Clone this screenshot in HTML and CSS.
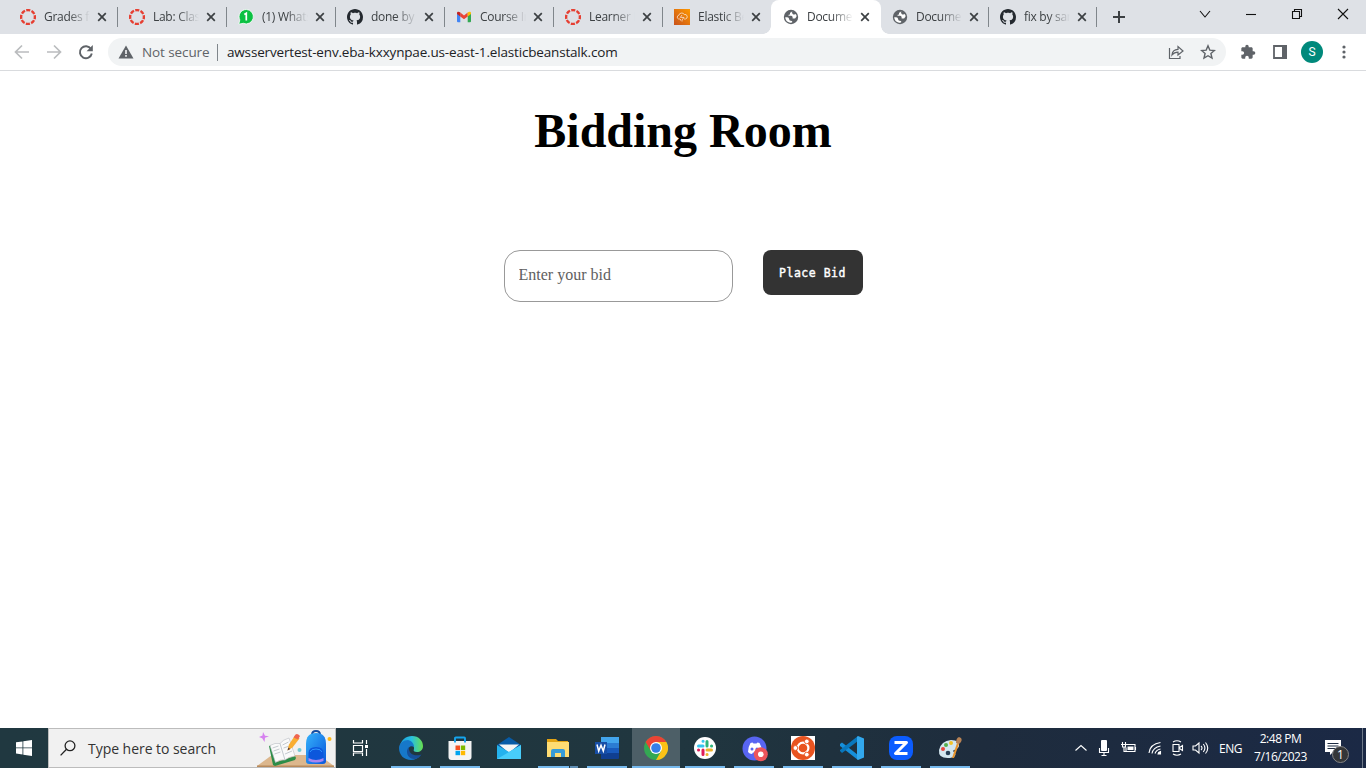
FILE: index.html
```html
<!DOCTYPE html>
<html lang="en">
<head>
<meta charset="utf-8">
<title>Bidding Room</title>
<link rel="stylesheet" href="styles.css">
</head>
<body>
<svg class="defs" width="0" height="0">
  <symbol id="canvas" viewBox="0 0 16 16"><circle cx="8" cy="8" r="6.9" fill="none" stroke="#e63f32" stroke-width="2.4" stroke-dasharray="4.1 1.32" stroke-dashoffset="2"/></symbol>
  <symbol id="whats" viewBox="0 0 16 16"><path d="M8.3.5a7.2 7.2 0 1 1-3 13.8L.8 15.2l1-4.3A7.2 7.2 0 0 1 8.3.5z" fill="#0cc143" stroke="#fff" stroke-width=".8"/><path d="M6.3 5.500l2-1.3v7.300" fill="none" stroke="#fff" stroke-width="1.7"/></symbol>
  <symbol id="github" viewBox="0 0 16 16"><path fill="#24292f" fill-rule="evenodd" d="M8 0C3.58 0 0 3.58 0 8c0 3.54 2.29 6.53 5.47 7.59.4.07.55-.17.55-.38 0-.19-.01-.82-.01-1.49-2.01.37-2.53-.49-2.69-.94-.09-.23-.48-.94-.82-1.13-.28-.15-.68-.52-.01-.53.63-.01 1.08.58 1.23.82.72 1.21 1.87.87 2.33.66.07-.52.28-.87.51-1.07-1.78-.2-3.64-.89-3.64-3.95 0-.87.31-1.59.82-2.15-.08-.2-.36-1.02.08-2.12 0 0 .67-.21 2.2.82.64-.18 1.32-.27 2-.27s1.36.09 2 .27c1.53-1.04 2.2-.82 2.2-.82.44 1.1.16 1.92.08 2.12.51.56.82 1.27.82 2.15 0 3.07-1.87 3.75-3.65 3.95.29.25.54.73.54 1.48 0 1.07-.01 1.93-.01 2.2 0 .21.15.46.55.38A8.01 8.01 0 0 0 16 8c0-4.42-3.58-8-8-8z"/></symbol>
  <symbol id="gmail" viewBox="0 0 16 16"><path d="M1 4v8.3q0 1 1 1h2.300V6.500z" fill="#4285f4"/><path d="M15 4v8.300q0 1-1 1h-2.300V6.500z" fill="#34a853"/><path d="M4.300 3.600L8 6.400l3.700-2.800v3.800L8 10.200 4.300 7.400z" fill="#ea4335"/><path d="M1 4.300C1 2.700 2.800 2.400 4.300 3.600v3.800L1 5z" fill="#c5221f"/><path d="M15 4.300c0-1.600-1.800-1.900-3.300-.7v3.800L15 5z" fill="#fbbc04"/></symbol>
  <symbol id="aws" viewBox="0 0 16 16"><defs><linearGradient id="awsg" x1="0" y1="1" x2="1" y2="0"><stop stop-color="#c8511b"/><stop offset="1" stop-color="#ff9900"/></linearGradient></defs><path d="M0 0h16v16H0z" fill="url(#awsg)"/><path d="M6 10H4.700a1.900 1.900 0 0 1 .1-3.700A3 3 0 0 1 10.300 5.500 2.300 2.300 0 0 1 11.500 10H10M8 6L6.300 8.400h1.900M8 8.400h2L8 11v1.500M6.500 10v1.500" fill="none" stroke="#fff" stroke-opacity=".85" stroke-width=".75"/></symbol>
  <symbol id="globe" viewBox="0 0 16 16"><circle cx="8" cy="8" r="7.200" fill="#5f6368"/><path d="M9.200 2.200Q8.500 3.600 7 3.800v1.700q-1.700 0-1.600 1.300h2.800q1.400.1 1.400 1.500v1.200h2q1-.2 1.200-1 1-.5.700-2-.4-1.200-1.300-1.600-1 1-2.300.3-1.300-1-.7-3zM2.200 8.200q.3 4.600 4.900 5.500 2 .2 2.300-.8-.1-1.200-1.800-1.200-1.500-.1-1.500-1.700-.1-1.800-1.900-1.800z" fill="#fff"/></symbol>
  <symbol id="close" viewBox="0 0 10 10"><path d="M1.200 1.200l7.600 7.600M8.800 1.200L1.200 8.800" stroke="#3c4043" stroke-width="1.700"/></symbol>
</svg>

<div class="tabstrip">
  <div class="tab"><svg class="fav"><use href="#canvas"/></svg><span class="title">Grades for</span><svg class="x"><use href="#close"/></svg></div>
  <div class="tab sep"><svg class="fav"><use href="#canvas"/></svg><span class="title">Lab: Class</span><svg class="x"><use href="#close"/></svg></div>
  <div class="tab sep"><svg class="fav"><use href="#whats"/></svg><span class="title">(1) WhatsApp</span><svg class="x"><use href="#close"/></svg></div>
  <div class="tab sep"><svg class="fav"><use href="#github"/></svg><span class="title">done by s</span><svg class="x"><use href="#close"/></svg></div>
  <div class="tab sep"><svg class="fav"><use href="#gmail"/></svg><span class="title">Course Inv</span><svg class="x"><use href="#close"/></svg></div>
  <div class="tab sep"><svg class="fav"><use href="#canvas"/></svg><span class="title">Learner De</span><svg class="x"><use href="#close"/></svg></div>
  <div class="tab sep"><svg class="fav"><use href="#aws"/></svg><span class="title">Elastic Beanstalk</span><svg class="x"><use href="#close"/></svg></div>
  <div class="tab active"><svg class="fav"><use href="#globe"/></svg><span class="title">Document</span><svg class="x"><use href="#close"/></svg></div>
  <div class="tab after"><svg class="fav"><use href="#globe"/></svg><span class="title">Document</span><svg class="x"><use href="#close"/></svg></div>
  <div class="tab sep last"><svg class="fav"><use href="#github"/></svg><span class="title">fix by sara</span><svg class="x"><use href="#close"/></svg></div>
  <svg class="plus" viewBox="0 0 12 12"><path d="M6 0v12M0 6h12" stroke="#3c4043" stroke-width="2"/></svg>
  <div class="window-controls">
    <svg viewBox="0 0 12 12"><path d="M1 3l5 6 5-6" /></svg>
    <svg viewBox="0 0 12 12"><path d="M1 6.500h10"/></svg>
    <svg viewBox="0 0 12 12"><path d="M1.500 3.500h7v7h-7zM3.500 3.500v-2h7v7h-2"/></svg>
    <svg viewBox="0 0 12 12"><path d="M1 1l10 10M11 1L1 11"/></svg>
  </div>
</div>

<div class="toolbar">
  <svg class="nav off" viewBox="0 0 16 16"><path d="M15 8H2M8 1.500L1.500 8 8 14.500"/></svg>
  <svg class="nav off" viewBox="0 0 16 16"><path d="M1 8h13M8 1.500L14.500 8 8 14.500"/></svg>
  <svg class="nav" viewBox="0 0 16 16"><path d="M13 5A6 6 0 1 0 13.800 9.500"/><path d="M14.800 1v6.200H8.600z" fill="#5f6368" stroke="none"/></svg>
  <div class="omnibox">
    <svg class="warn" viewBox="0 0 16 14"><path d="M8 .5L15.500 13.500H.5z" fill="#5f6368"/><path d="M8 5v4M8 10v1.700" stroke="#fff" stroke-width="1.500"/></svg>
    <span class="insecure">Not secure</span>
    <span class="url">awsservertest-env.eba-kxxynpae.us-east-1.elasticbeanstalk.com</span>
    <svg class="share" viewBox="0 0 16 16"><path d="M1.500 4v10.500h10.500V12M4 11c.3-4 2.500-5.600 6-5.700V2.500L15 7l-5 4V8.200C7.500 8.200 5.600 9 4 11z"/></svg>
    <svg class="star" viewBox="0 0 16 16"><path d="M8 1.800l1.800 4.300 4.600.4-3.500 3 1.100 4.600L8 11.700l-4 2.400 1.100-4.600-3.500-3 4.600-.4z"/></svg>
  </div>
  <svg class="puzzle" viewBox="0 0 24 24"><path d="M20.500 11H19V7c0-1.100-.9-2-2-2h-4V3.500a2.500 2.500 0 0 0-5 0V5H4c-1.100 0-2 .9-2 2v3.800h1.500a2.700 2.700 0 0 1 0 5.400H2V20c0 1.100.9 2 2 2h3.800v-1.500a2.700 2.700 0 0 1 5.400 0V22H17c1.100 0 2-.9 2-2v-4h1.500a2.500 2.500 0 0 0 0-5z" fill="#5f6368"/></svg>
  <svg class="panel" viewBox="0 0 14 14"><path d="M1 1h12v12H1z" fill="none" stroke="#5f6368" stroke-width="1.800"/><path d="M9 0h5v14H9z" fill="#5f6368"/></svg>
  <span class="avatar">S</span>
  <svg class="dots" viewBox="0 0 4 14"><g fill="#5f6368"><circle cx="2" cy="2" r="1.600"/><circle cx="2" cy="7" r="1.600"/><circle cx="2" cy="12" r="1.600"/></g></svg>
</div>

<main class="page">
  <h1>Bidding Room</h1>
  <form class="bid-form">
    <input class="bid-input" type="text" placeholder="Enter your bid">
    <button class="bid-button" type="button">Place Bid</button>
  </form>
</main>

<div class="taskbar">
  <div class="start"><svg width="16" height="16" viewBox="0 0 16 16"><path d="M0 2.300l6.500-.9v6.100H0zM7.300 1.300L16 0v7.500H7.300zM0 8.300h6.500v6.200L0 13.600zM7.300 8.300H16V16l-8.700-1.300z" fill="#fff"/></svg></div>
  <div class="search">
    <svg class="lens" viewBox="0 0 16 16"><circle cx="10" cy="5.800" r="4.900"/><path d="M6.500 9.300L.6 15.400"/></svg>
    <span class="search-text">Type here to search</span>
    <svg class="doodle" viewBox="0 0 78 38">
      <defs><linearGradient id="bag" x2="1" y2="1"><stop stop-color="#35b2fb"/><stop offset="1" stop-color="#0a57dc"/></linearGradient></defs>
      <path d="M15 26h47l15 11H0z" fill="#dcb78d"/><path d="M0 36.500h77V38H0z" fill="#b88a5b"/>
      <path d="M12 17l3-1 5 17 18-6 1 2-1 2-20 6-2-1z" fill="#2c8d48"/>
      <path d="M13 16.500q5-3 10-2 3-4 9-5.500l6 18q-7 1-10 4-5-1-9.500 2.500z" fill="#fafafa" stroke="#b9bcc2" stroke-width=".6"/>
      <path d="M23 14.500L28 31M15.500 19l6-2M16.500 22l6-2M17.500 25l6-2M25.500 16l6-3M26.500 19l6-2M28 25l7-3" fill="none" stroke="#b5bdc3" stroke-width=".8"/>
      <path d="M30.500 21.500l1.500-6 6-9 4.500 3-7 9z" fill="#f9ae32"/><path d="M36.500 8.500l2-3q2-1.500 4.500 1.500l-2 3.500z" fill="#ef6650"/><path d="M30.500 21.500l.7-3 2.300 1.500z" fill="#644334"/>
      <path d="M6 3l2 3.700 4 .6-4 1.400-.5 4.300-2.300-3.800L2 8l3.500-1.500z" fill="#d681ef"/>
      <path d="M55 6q0-4 4-4t4 4" fill="none" stroke="#134b9f" stroke-width="2"/><path d="M49 15Q49 4 59 4t10 11v17q0 3-3 3H52q-3 0-3-3z" fill="url(#bag)"/>
      <path d="M51.500 31v-7q0-6 7.500-6t7.500 6v7q-7.500 4-15 0z" fill="#0c57dc"/><path d="M53 23q1-3 6-3t6 3" stroke="#2c96ff" fill="none"/><path d="M51.500 29q7.500 4 15 0v3q-7.500 3-15 0z" fill="#a886f0"/>
      <circle cx="72.500" cy="10" r="2" fill="#ffb817"/><circle cx="42.500" cy="21" r="2" fill="#72cbd4"/>
    </svg>
  </div>
  <div class="task view"><svg width="18" height="18" viewBox="0 0 18 18"><path d="M2.500 1v3h9V1M2.500 17v-3h9v3M2.500 6.500h9v6h-9zM15.500 1v4M15.500 10v7" fill="none" stroke="#fff" stroke-width="1.200"/><path d="M14 6h3v3h-3z" fill="#fff"/></svg></div>
  <div class="task open"><svg width="24" height="24" viewBox="0 0 24 24"><defs><linearGradient id="eg"><stop stop-color="#1a9fdc"/><stop offset=".5" stop-color="#28bfe0"/><stop offset="1" stop-color="#68e04d"/></linearGradient></defs><path d="M1 10C2 4 7 0 13 0c7 0 11 5 11 10 0 4-3 6-6 6-3 0-4-1-3-3 1-5-7-8-14-3z" fill="url(#eg)"/><path d="M0 12c0-5 5-8 9-8 4 1 6 4 6 7-3-2-6 0-6 4 0 5 6 8 12 5-2 2-5 4-9 4C5 24 0 19 0 12z" fill="#1678c9"/><path d="M10 11c-4 3-2 12 5 12 3 0 6-2 7.500-4.500C16 21 9 18 10 11z" fill="#164f99"/></svg></div>
  <div class="task open"><svg width="24" height="24" viewBox="0 0 24 24"><path d="M7 6V2.300Q7 1.500 7.800 1.500h8.400q.8 0 .8.800V6" fill="none" stroke="#15a5ee" stroke-width="1.900"/><path d="M.5 5h23v16q0 3-3 3h-17q-3 0-3-3z" fill="#f4f4f4"/><path d="M7 5v1.500M17 5v1.500" stroke="#15a5ee" stroke-width="1.900"/><path d="M7.500 9.500H12V14H7.500z" fill="#f25022"/><path d="M12.800 9.500h4.400V14h-4.400z" fill="#7fba00"/><path d="M7.500 14.800H12v4.400H7.500z" fill="#00a4ef"/><path d="M12.800 14.800h4.400v4.400h-4.400z" fill="#ffb900"/></svg></div>
  <div class="task"><svg width="24" height="24" viewBox="0 0 24 24"><path d="M0 9L12 1l12 8-12 8z" fill="#075ba7"/><path d="M2 8.500h20L12 17z" fill="#f4f5f5"/><path d="M0 9l12 7 12-7v14H0z" fill="#24b2ee"/><path d="M0 23L24 9v14z" fill="#48cdfa"/></svg></div>
  <div class="task open explorer"><svg width="24" height="24" viewBox="0 0 24 24"><path d="M1 3h9l2 2h10v4H1z" fill="#e4a414"/><path d="M1 6h22v15H1z" fill="#ffdc73"/><path d="M5 21v-6q0-2 2-2h10q2 0 2 2v6h-4v-4H9v4z" fill="#369bd8"/></svg></div>
  <div class="task open"><svg width="24" height="24" viewBox="0 0 24 24"><path d="M6 1h18v7H6z" fill="#42a5ed"/><path d="M6 7h18v6H6z" fill="#2b7cd3"/><path d="M6 12h18v6H6z" fill="#185abd"/><path d="M6 17h18v5q0 1-1 1H6z" fill="#103f91"/><path d="M0 6h12v12H0z" fill="#174ea6"/><path d="M2 8.500l1.700 6.500L6 9.200 8.300 15 10 8.500" fill="none" stroke="#fff" stroke-width="1.500"/></svg></div>
  <div class="task open current"><svg width="24" height="24" viewBox="0 0 24 24"><circle cx="12" cy="12" r="12" fill="#34a853"/><path d="M1.600 6A12 12 0 0 1 22.400 6H12L7 15z" fill="#ea4335"/><path d="M22.400 6A12 12 0 0 1 12 24l5.200-9L12 6z" fill="#fbc116"/><circle cx="12" cy="12" r="6" fill="#fff"/><circle cx="12" cy="12" r="4.800" fill="#347ee8"/></svg></div>
  <div class="task open"><svg width="24" height="24" viewBox="0 0 24 24"><circle cx="12" cy="12" r="11" fill="#fff"/><g stroke-width="3" stroke-linecap="round"><path d="M10 5.300h.1M10 10H5.500" stroke="#36c5f0"/><path d="M14 5.500V10M18.500 10h.1" stroke="#2eb67d"/><path d="M14 14h4.500M14 18.500h.1" stroke="#ecb22e"/><path d="M10 14v4.500M5.500 14h.1" stroke="#e01e5a"/></g></svg></div>
  <div class="task open"><svg class="discord" width="26" height="26" viewBox="0 0 26 26"><circle cx="12.500" cy="12.500" r="12" fill="#5865f2"/><path d="M8.500 7l2-.6 1 1h3l1-1 2 .6q2.500 4 2.500 9-2 2-4 2l-1-1.500h-4L10 18q-2.500-.2-4-2 0-5 2.500-9z" fill="#fff"/><circle cx="10" cy="13" r="1.500" fill="#5865f2"/><circle cx="15" cy="13" r="1.500" fill="#5865f2"/><circle cx="18.800" cy="18.300" r="7" fill="#ed555b"/><circle cx="18.800" cy="18.300" r="2.800" fill="#fff"/></svg></div>
  <div class="task open"><svg width="24" height="24" viewBox="0 0 24 24"><path d="M0 0h24v24H0z" fill="#fff"/><circle cx="12" cy="12" r="12" fill="#e95420"/><circle cx="12" cy="12" r="5.400" fill="none" stroke="#fff" stroke-width="2.200"/><g fill="#fff" stroke="#e95420" stroke-width=".9"><circle cx="4.400" cy="12" r="2.400"/><circle cx="15.800" cy="5.400" r="2.400"/><circle cx="15.800" cy="18.600" r="2.400"/></g></svg></div>
  <div class="task open"><svg width="24" height="24" viewBox="0 0 24 24"><path d="M0 8l2-1.500L18 19v5L0 10z" fill="#168fda"/><path d="M0 15l2 2L18 5V0L0 14z" fill="#0877bd"/><path d="M18 0l6 2.500v19L18 24l-1-1V1z" fill="#32a8ed"/></svg></div>
  <div class="task open"><svg width="24" height="24" viewBox="0 0 24 24"><rect width="24" height="24" rx="8" fill="#0b5cff"/><path d="M5.500 6.500h12L6.500 17.500h12" fill="none" stroke="#fff" stroke-width="3" stroke-linejoin="round"/></svg></div>
  <div class="task open"><svg width="24" height="24" viewBox="0 0 24 24"><path d="M1 14Q3 5 13 4q9 0 8 6-1 3-5 4-2 1 1 3 2 4-5 5Q0 23 1 14z" fill="#d4e7ef"/><circle cx="5" cy="13" r="2" fill="#e9453c"/><circle cx="8" cy="9" r="2" fill="#55ae4c"/><circle cx="13" cy="7" r="2" fill="#f2c32a"/><circle cx="10" cy="17" r="2.300" fill="#263f55"/><path d="M14 22L19 7l2 1-5 14z" fill="#e8942e"/><path d="M18 7q0-5 3-6l2 1q2 3-2 6z" fill="#b98355"/></svg></div>
  <div class="tray">
    <svg class="t-chevron" viewBox="0 0 14 14"><path d="M1.500 9.500L7 4.500l5.500 5"/></svg>
    <svg class="t-mic" viewBox="0 0 12 16"><rect x="3" width="6" height="11" rx="1" fill="#fff" stroke="none"/><path d="M1.500 8v4.500h9V8M6 12.500V15M3.500 15.500h5"/></svg>
    <svg class="t-battery" viewBox="0 0 16 12"><path d="M5 2.500h9v7H5v-4M14.500 5v3M0 2.500h5M1.500 0v5h3V0M3 5v4.500h2"/><path d="M6.500 4.500h6v3.500h-6z" fill="#fff" stroke="none"/></svg>
    <svg class="t-wifi" viewBox="0 0 14 14"><path d="M1 12Q2 3 12.500 1.500M4 12.500Q5 6.500 12.500 5M7 12.500q1-3.500 5.500-4.500"/><path d="M10 13q.2-2 2.500-2.500V13z" fill="#fff"/></svg>
    <svg class="t-camera" viewBox="0 0 14 16"><path d="M2 4.500h6v7H2zM8.500 7.500l3-2v5l-3-2M2 2q4-2.500 8 0M2 14q4 2.500 8 0"/></svg>
    <svg class="t-volume" viewBox="0 0 17 14"><path d="M1 5h2.500L7 2v10L3.500 9H1zM9 5q2 2 0 4M11.300 3q3.200 4 0 8M13.500 1.500q4.500 5.500 0 11"/></svg>
    <span class="lang">ENG</span>
    <div class="clock"><span class="time">2:48 PM</span><span class="date">7/16/2023</span></div>
    <div class="notify"><svg width="16" height="16" viewBox="0 0 16 16"><path d="M0 0h16v12H8l-3 3v-3H0z" fill="#fff"/><path d="M2.500 3.500h11M2.500 6h11M2.500 8.500h8" stroke="#1d2c42"/></svg><span class="badge">1</span></div>
  </div>
</div>
</body>
</html>
```

FILE: styles.css
```css
* { box-sizing: border-box; }
body {
  margin: 0;
  width: 1366px;
  height: 768px;
  overflow: hidden;
  display: flex;
  flex-direction: column;
  background: #fff;
  font-family: "Open Sans", "Noto Sans", sans-serif;
}
svg { display: block; flex: none; }
.defs { position: absolute; }

.tabstrip { height: 34px; background: #dee1e6; display: flex; padding-left: 8px; flex: none; }
.tab { position: relative; width: 109px; height: 34px; flex: none; display: flex; align-items: center; padding-left: 12px; }
.tab.sep::before, .tab.last::after { content: ""; position: absolute; left: 0; top: 7px; width: 1px; height: 20px; background: #80868b; }
.tab.last::after { left: 108px; }
.tab.active { background: #fff; border-radius: 8px 8px 0 0; width: 110px; }
.tab.after { width: 108px; padding-left: 11px; }
.tab.last { margin-left: -1px; }
.tab.active::before, .tab.active::after { content: ""; position: absolute; bottom: 0; width: 8px; height: 8px; }
.tab.active::before { left: -8px; background: radial-gradient(circle at 0 0, transparent 7.5px, #fff 8px); }
.tab.active::after { right: -8px; background: radial-gradient(circle at 100% 0, transparent 7.5px, #fff 8px); }
.fav { width: 16px; height: 16px; margin-right: 8px; }
.title { width: 46px; overflow: hidden; white-space: nowrap; font-size: 12px; letter-spacing: -.28px; line-height: 16px; color: #3c4043; -webkit-mask-image: linear-gradient(90deg, #000 24px, transparent 46px); mask-image: linear-gradient(90deg, #000 24px, transparent 46px); }
.x { width: 10px; height: 10px; margin-left: 7px; }
.plus { width: 12px; height: 12px; margin: 11px 0 0 16px; }
.window-controls { display: flex; gap: 34px; margin: 8px 17px 0 auto; }
.window-controls svg { width: 12px; height: 12px; fill: none; stroke: #111; stroke-width: 1.100; }

.toolbar { height: 37px; flex: none; display: flex; align-items: center; border-bottom: 1px solid #d9dbde; padding-left: 14px; }
.nav { width: 16px; height: 16px; margin-right: 16px; fill: none; stroke: #5f6368; stroke-width: 1.900; }
.nav.off { stroke: #babcbe; stroke-width: 1.700; }
.omnibox { width: 1118px; height: 28px; margin-left: -2px; border-radius: 14px; background: #f1f3f4; display: flex; align-items: center; padding: 0 10px; white-space: nowrap; }
.warn { width: 16px; height: 14px; margin-right: 8px; }
.insecure { width: 76px; height: 17px; line-height: 17px; color: #5f6368; letter-spacing: -.1px; border-right: 1px solid #80868b; margin-right: 9px; font-size: 13.500px; }
.url { color: #202124; font-size: 13.500px; letter-spacing: -.17px; }
.share, .star { width: 16px; height: 16px; fill: none; stroke: #5f6368; stroke-width: 1.200; }
.share { margin-left: auto; margin-right: 16px; }
.star { stroke-width: 1.400; }
.puzzle { width: 16px; height: 16px; margin-left: 14px; }
.panel { width: 14px; height: 14px; margin-left: 17px; }
.avatar { width: 22px; height: 22px; margin-left: 14px; border-radius: 50%; background: #00897b; color: #fff; font: 12px/22px Roboto, sans-serif; text-align: center; }
.dots { width: 4px; height: 14px; margin-left: 19px; }

.page { flex: 1; display: flex; flex-direction: column; align-items: center; font-family: "Liberation Serif", serif; }
h1 { margin: 32px 0 0; font-size: 48px; line-height: 55px; font-weight: 700; color: #000; }
.bid-form { margin-top: 92px; display: flex; gap: 30px; align-items: flex-start; }
.bid-input { width: 229px; height: 52px; padding: 0 13px 2px 14px; border: 1px solid #999; border-radius: 16px; background: #fff; font: 16px "Liberation Serif", serif; }
.bid-input::placeholder { color: #606060; }
.bid-button { width: 100px; height: 45px; padding: 0; border: 0; border-radius: 8px; background: #333; color: #fff; font: 11.500px "DejaVu Sans Mono", monospace; -webkit-text-stroke: .4px #fff; letter-spacing: .5px; }

.taskbar { height: 40px; flex: none; display: flex; background: linear-gradient(90deg, #203840 0%, #20363f 50%, #1e2c3d 72%, #1b2945 100%); color: #fff; }
.start { width: 48px; display: flex; align-items: center; justify-content: center; }
.search { width: 288px; height: 40px; display: flex; align-items: center; background: #f1f1f1; border: 1px solid #bcbcbc; padding-left: 11px; }
.lens { width: 16px; height: 16px; fill: none; stroke: #222; stroke-width: 1.300; margin-right: 12px; }
.search-text { color: #333; font-size: 14px; letter-spacing: -.04px; white-space: nowrap; }
.doodle { width: 78px; height: 38px; margin-left: auto; }
.task { position: relative; width: 49px; height: 40px; flex: none; display: flex; align-items: center; justify-content: center; }
.task.view { margin-right: 1.500px; padding-right: 2px; }
.task svg { position: relative; }
.task.open::after { content: ""; position: absolute; left: 4.500px; bottom: 0; width: 40px; height: 2px; background: #76b9ed; }
.explorer::after { background: linear-gradient(90deg, #76b9ed 31px, #20363f 31px, #20363f 32px, #5f8eb4 32px) !important; }
.current::before { content: ""; position: absolute; left: .5px; top: 0; width: 48px; height: 40px; background: #4d5f67; }
.current::after { left: .5px !important; width: 48px !important; }
.discord { margin-left: 1px; margin-top: 2px; }
.tray { margin-left: auto; display: flex; align-items: center; padding-right: 3px; }
.tray > svg { fill: none; stroke: #fff; stroke-width: 1.100; }
.t-chevron { width: 14px; height: 14px; margin-right: 10px; }
.t-mic { width: 12px; height: 16px; margin-right: 11px; }
.t-battery { width: 16px; height: 12px; margin-right: 11px; }
.t-wifi { width: 14px; height: 14px; margin-right: 9px; }
.t-camera { width: 14px; height: 16px; margin-right: 7px; }
.t-volume { width: 17px; height: 14px; margin-right: 10px; }
.lang { width: 24px; font-size: 12px; letter-spacing: -.5px; }
.clock { width: 76px; display: flex; flex-direction: column; align-items: center; padding-right: 1px; font-size: 12px; line-height: 18px; letter-spacing: -.45px; }
.notify { position: relative; width: 44px; height: 40px; padding: 12px 0 0 6px; border-right: 1px solid #6d7887; }
.badge { position: absolute; left: 13px; top: 18px; width: 17px; height: 17px; border-radius: 50%; border: 1px solid #858585; background: #343638; font-size: 12px; line-height: 15px; text-align: center; }
```
